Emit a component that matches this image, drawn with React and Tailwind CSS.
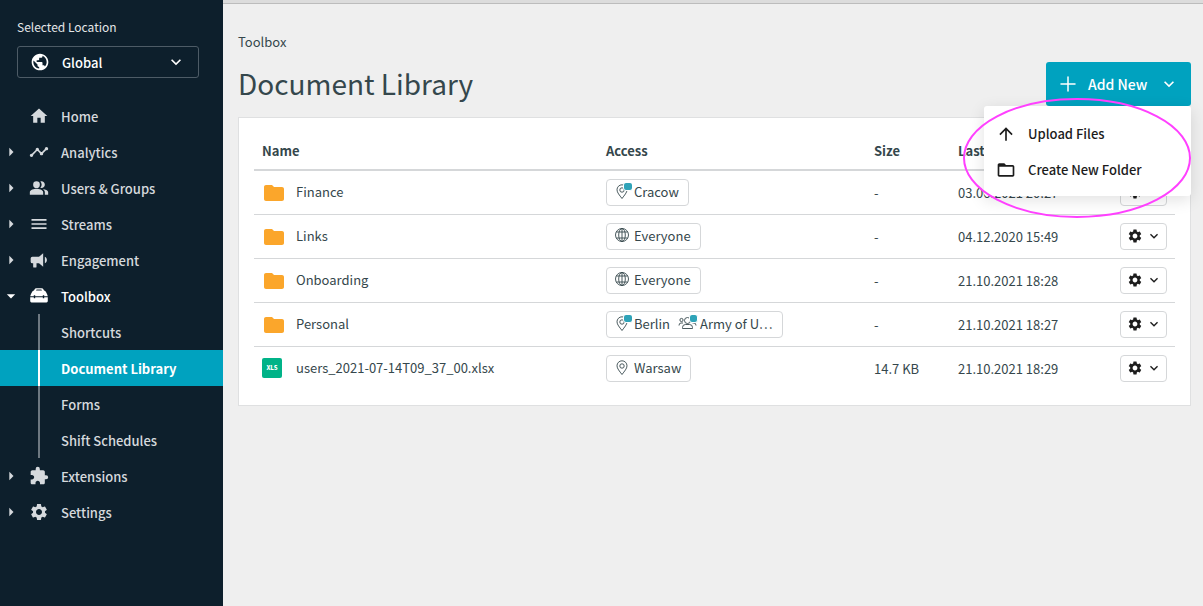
import { useState } from 'react';
import { Plus } from 'lucide-react';
import {
    MdArrowDropDown,
    MdArrowRight,
    MdArrowUpward,
    MdExtension,
    MdFolder,
    MdFolderOpen,
    MdHome,
    MdKeyboardArrowDown,
    MdMenu,
    MdPeopleAlt,
    MdPublic,
    MdSettings,
    MdTimeline,
} from 'react-icons/md';

const BullhornIcon = ({ className }) => (
    <svg className={className} fill="currentColor" viewBox="0 0 24 24" aria-hidden="true">
        <path d="M12 8H4a2 2 0 0 0-2 2v4a2 2 0 0 0 2 2h1v4a1 1 0 0 0 1 1h2a1 1 0 0 0 1-1v-4h3l5 4V4l-5 4m9.500 4c0 1.710-.96 3.260-2.500 4V8c1.530.75 2.500 2.300 2.500 4z" />
    </svg>
);

const ToolboxIcon = ({ className }) => (
    <svg className={className} fill="currentColor" viewBox="0 0 20 20" aria-hidden="true">
        <path fillRule="evenodd" d="M7.500 2.200h5q1.500 0 2 1.300l.4.700q2.100.8 3.100 3.800l.8 2.200h-3.600v-.9h-1.400v.9H6.200v-.9H4.800v.9H1.200L2 8q1-3 3.100-3.800l.4-.7q.5-1.300 2-1.300zm.1 1.200-.6 1h6l-.6-1z" />
        <path d="M1.200 11.200h3.600v1h1.400v-1h7.600v1h1.400v-1h3.600V15q0 1.400-1.300 1.400h-15Q1.200 16.400 1.200 15z" />
    </svg>
);

const PinIcon = ({ badge }) => (
    <svg className="w-[18px] h-[18px] shrink-0" fill="none" stroke="currentColor" viewBox="0 0 18 18" aria-hidden="true">
        <path strokeWidth=".9" d="M8 15.500C5.500 12.200 3 9.500 3 6.800a5 5 0 0 1 10 0c0 2.700-2.500 5.400-5 8.700z" />
        <circle strokeWidth=".9" cx="8" cy="7" r="2.200" />
        {badge && <rect x="9.500" y="-.5" width="9" height="8" rx="2.500" fill="#2fa3b8" stroke="#fff" />}
    </svg>
);

const GlobeIcon = () => (
    <svg className="w-[18px] h-[18px] shrink-0" fill="none" stroke="currentColor" strokeWidth=".9" viewBox="0 0 18 18" aria-hidden="true">
        <circle cx="8" cy="8" r="6.500" />
        <ellipse cx="8" cy="8" rx="3.300" ry="6.500" />
        <path d="M8 1.500v13M2.200 5h11.600M2.200 11h11.600" />
    </svg>
);

const GroupIcon = () => (
    <svg className="w-5 h-[18px] shrink-0" fill="none" stroke="currentColor" strokeWidth=".9" viewBox="0 0 20 18" aria-hidden="true">
        <circle cx="9.500" cy="5.500" r="3" />
        <path d="M4.500 13.500v-1q0-3 3-3h4q3 0 3 3v1z" />
        <circle cx="3.500" cy="5" r="1.600" />
        <path d="M1 10.500Q1 8 3 8h2M18 10.500q0-2.500-2-2.500h-1.500" />
        <rect x="11.500" y="-.5" width="8" height="8" rx="2.500" fill="#2fa3b8" stroke="#fff" strokeWidth="1" />
    </svg>
);

const navItems = [
    { label: 'Home', icon: MdHome },
    { label: 'Analytics', icon: MdTimeline, expandable: true },
    { label: 'Users & Groups', icon: MdPeopleAlt, expandable: true },
    { label: 'Streams', icon: MdMenu, expandable: true },
    { label: 'Engagement', icon: BullhornIcon, expandable: true },
    {
        label: 'Toolbox',
        icon: ToolboxIcon,
        expandable: true,
        children: ['Shortcuts', 'Document Library', 'Forms', 'Shift Schedules'],
    },
    { label: 'Extensions', icon: MdExtension, expandable: true },
    { label: 'Settings', icon: MdSettings, expandable: true },
];

const documents = [
    { name: 'Finance', access: [{ type: 'pin', label: 'Cracow', badge: true }], size: '-', updated: '03.06.2021 20:27' },
    { name: 'Links', access: [{ type: 'globe', label: 'Everyone' }], size: '-', updated: '04.12.2020 15:49' },
    { name: 'Onboarding', access: [{ type: 'globe', label: 'Everyone' }], size: '-', updated: '21.10.2021 18:28' },
    {
        name: 'Personal',
        access: [
            { type: 'pin', label: 'Berlin', badge: true },
            { type: 'group', label: 'Army of U…' },
        ],
        size: '-',
        updated: '21.10.2021 18:27',
    },
    {
        name: 'users_2021-07-14T09_37_00.xlsx',
        file: true,
        access: [{ type: 'pin', label: 'Warsaw' }],
        size: '14.7 KB',
        updated: '21.10.2021 18:29',
    },
];

const NavItem = ({ item }) => {
    const Icon = item.icon;
    const open = Boolean(item.children);

    return (
        <li>
            <a href="#" className={`flex items-center h-9 ${open ? 'text-white' : 'text-[#d5d9dd]'}`}>
                <span className="w-[29px] flex items-center pl-px">
                    {item.expandable && (open ? <MdArrowDropDown className="w-5 h-5" /> : <MdArrowRight className="w-5 h-5" />)}
                </span>
                <Icon className="w-5 h-5" />
                <span className="ml-3 pt-[2px]">{item.label}</span>
            </a>
            {open && (
                <ul>
                    {item.children.map((child) => {
                        const active = child === 'Document Library';
                        return (
                            <li key={child} className={active ? 'bg-[#00a2bf] text-white font-bold' : 'text-[#d5d9dd]'}>
                                <a href="#" className="flex items-center h-9 pl-[38px]">
                                    <span className={`w-[2px] h-full ${active ? 'bg-white' : 'bg-[#6d7881]'}`} />
                                    <span className="ml-[21px] pt-[2px]">{child}</span>
                                </a>
                            </li>
                        );
                    })}
                </ul>
            )}
        </li>
    );
};

const Sidebar = () => {
    const [location, setLocation] = useState('global');

    return (
        <aside className="w-[223px] shrink-0 bg-[#0d1f2c] font-medium">
            <div className="px-[17px] pt-[17px]">
                <label htmlFor="location" className="block text-xs leading-5 font-normal text-[#e3e6e8]">Selected Location</label>
                <div className="relative mt-[9px] w-[182px] text-white">
                    <select
                        id="location"
                        value={location}
                        onChange={(e) => setLocation(e.target.value)}
                        className="w-full h-8 pl-11 pt-[2px] appearance-none rounded-[3px] border border-[#4d5b66] bg-transparent"
                    >
                        <option value="global">Global</option>
                    </select>
                    <MdPublic className="absolute left-[13px] top-[6px] w-5 h-5 pointer-events-none" />
                    <MdKeyboardArrowDown className="absolute right-[13px] top-[6px] w-5 h-5 pointer-events-none" />
                </div>
            </div>
            <nav className="mt-5">
                <ul>
                    {navItems.map((item) => (
                        <NavItem key={item.label} item={item} />
                    ))}
                </ul>
            </nav>
        </aside>
    );
};

const AccessTag = ({ access }) => (
    <span className="inline-flex items-center gap-2 h-[27px] pl-[7px] pr-[9px] rounded border border-[#d5d7d9] align-middle">
        {access.map((item) => (
            <span key={item.label} className="flex items-center gap-[2px]">
                {item.type === 'pin' && <PinIcon badge={item.badge} />}
                {item.type === 'globe' && <GlobeIcon />}
                {item.type === 'group' && <GroupIcon />}
                {item.label}
            </span>
        ))}
    </span>
);

const DocumentRow = ({ doc }) => (
    <tr className="h-11 border-b border-[#d5d7d9] last:border-b-0">
        <td className="px-2">
            <span className="flex items-center gap-[10px]">
                {doc.file ? (
                    <span className="flex items-center justify-center w-5 h-5 mr-1 rounded-[2px] bg-[#00b388] text-[6px] font-black leading-none text-white">
                        XLS
                    </span>
                ) : (
                    <MdFolder className="w-6 h-[26px] pt-[2px] text-[#fba62b]" />
                )}
                {doc.name}
            </span>
        </td>
        <td className="px-2">
            <AccessTag access={doc.access} />
        </td>
        <td className="px-2 pt-[2px]">{doc.size}</td>
        <td className="px-2 pt-[2px]">{doc.updated}</td>
        <td className="px-2">
            <button
                type="button"
                aria-label={`Actions for ${doc.name}`}
                className="flex items-center gap-[3px] w-[47px] h-[27px] pl-[6px] rounded border border-[#d5d7d9] bg-white text-[#1c1c1c]"
            >
                <MdSettings className="w-4 h-4" />
                <MdKeyboardArrowDown className="w-4 h-4" />
            </button>
        </td>
    </tr>
);

const AddNewMenu = () => {
    const [open, setOpen] = useState(true);

    return (
        <div className="relative font-medium">
            <button
                type="button"
                aria-expanded={open}
                onClick={() => setOpen(!open)}
                className="flex items-center w-[145px] h-11 pl-[10px] rounded-[3px] bg-[#00a2bf] text-sm text-white"
            >
                <Plus className="w-6 h-6" strokeWidth={1.5} />
                <span className="ml-2">Add New</span>
                <MdKeyboardArrowDown className="ml-3 w-5 h-5" />
            </button>
            {open && (
                <div className="absolute right-0 top-full z-10 w-[207px] pt-[10px] pb-2 rounded-[3px] bg-white text-[#1c1c1c] shadow-[0_4px_16px_rgba(0,0,0,0.12)]">
                    <button type="button" className="flex items-center w-full h-9 pl-3">
                        <MdArrowUpward className="w-5 h-5" />
                        <span className="ml-3">Upload Files</span>
                    </button>
                    <button type="button" className="flex items-center w-full h-9 pl-3">
                        <MdFolderOpen className="w-5 h-5" />
                        <span className="ml-3">Create New Folder</span>
                    </button>
                </div>
            )}
            {/* Highlight around the menu */}
            <svg className="absolute right-0 top-9 z-20 w-[228px] h-[120px] pointer-events-none" viewBox="0 0 228 120" fill="none" aria-hidden="true">
                <ellipse cx="114" cy="60" rx="113" ry="59" stroke="#ff40ff" strokeWidth="2" />
            </svg>
        </div>
    );
};

const App = () => {
    return (
        <div className="flex min-h-screen bg-[#efefef] text-[13px] leading-5 text-[#35474c] font-['Noto_Sans_CJK_SC','Open_Sans',sans-serif]">
            <Sidebar />
            <main className="flex-1 min-w-0">
                <div className="h-1 border-b border-[#bcbcbc] bg-[#dcdcdc]" />
                <div className="pl-[15px] pr-3 pt-7">
                    <div className="flex items-end justify-between">
                        <div className="pb-[3px]">
                            <a href="#" className="block">Toolbox</a>
                            <h1 className="mt-[11px] text-[28px] leading-10">Document Library</h1>
                        </div>
                        <AddNewMenu />
                    </div>

                    <div className="mt-[11px] px-[15px] pt-[14px] pb-[15px] border border-[#dfe0e1] bg-white">
                        <table className="w-full table-fixed text-left">
                            <thead>
                                <tr className="h-[38px] border-b-2 border-[#d5d7d9]">
                                    <th className="px-2">Name</th>
                                    <th className="w-[268px] px-2">Access</th>
                                    <th className="w-[84px] px-2">Size</th>
                                    <th className="w-[162px] px-2 truncate">Last Updated</th>
                                    <th className="w-[63px] px-2" aria-label="Actions" />
                                </tr>
                            </thead>
                            <tbody>
                                {documents.map((doc) => (
                                    <DocumentRow key={doc.name} doc={doc} />
                                ))}
                            </tbody>
                        </table>
                    </div>
                </div>
            </main>
        </div>
    );
};

export default App;
